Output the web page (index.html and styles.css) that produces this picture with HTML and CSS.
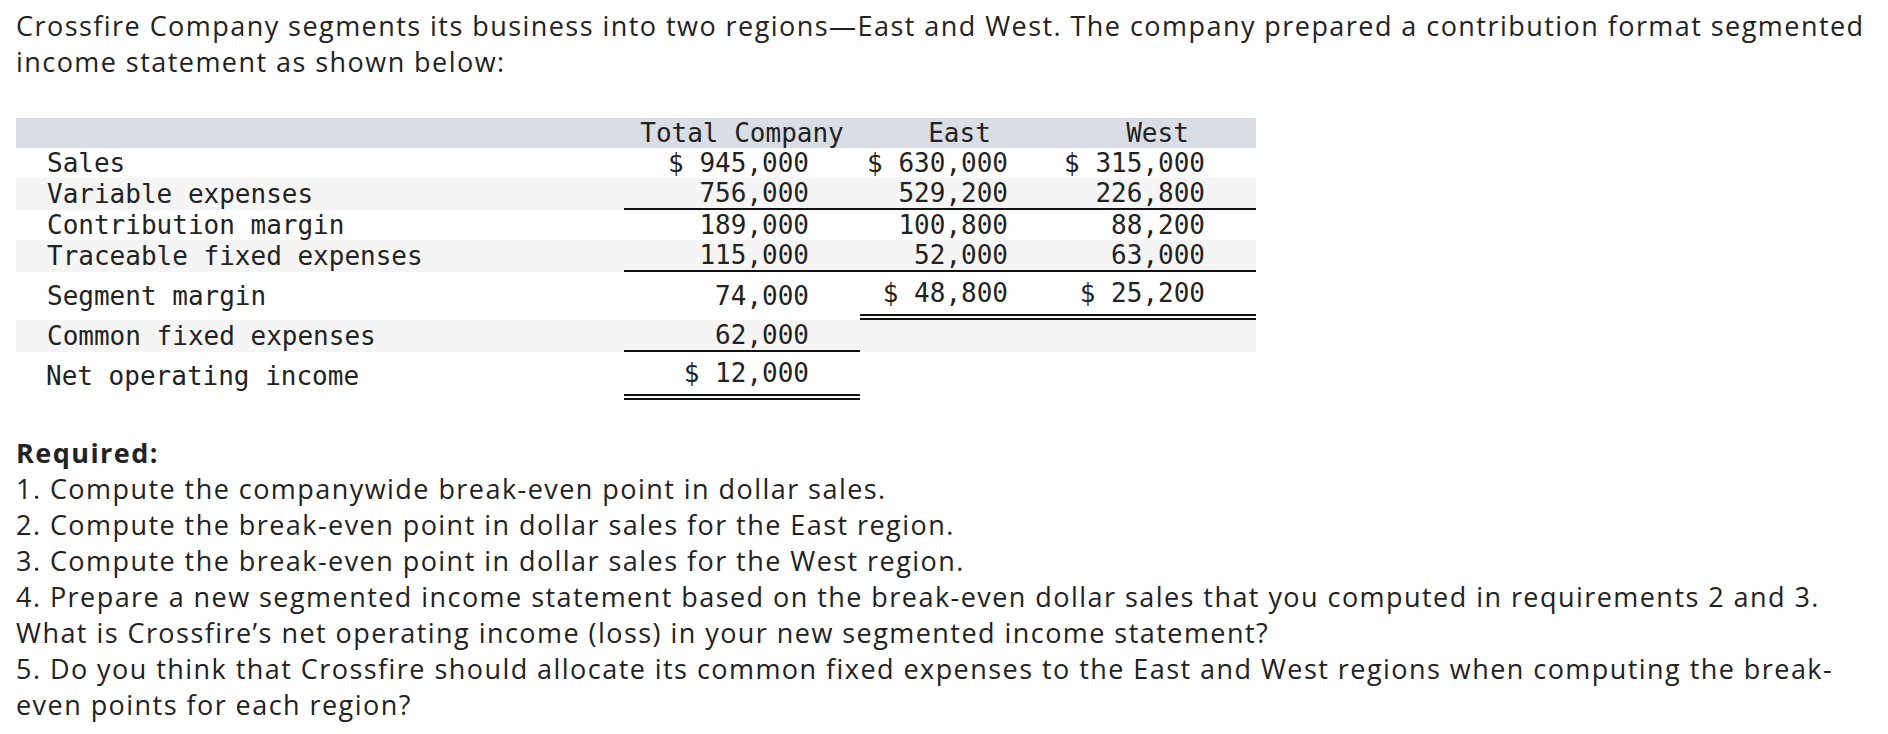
FILE: index.html
```html
<!DOCTYPE html>
<html lang="en">
<head>
<meta charset="utf-8">
<title>Crossfire Company</title>
<link rel="stylesheet" href="styles.css">
</head>
<body>
<div class="page">
  <p class="intro">Crossfire Company segments its business into two regions—East and West. The company prepared a contribution format segmented<br>income statement as shown below:</p>

  <table class="stmt">
    <colgroup>
      <col class="c-label">
      <col class="c-total">
      <col class="c-east">
      <col class="c-west">
    </colgroup>
    <thead>
      <tr class="head">
        <th></th>
        <th>Total Company</th>
        <th>East</th>
        <th>West</th>
      </tr>
    </thead>
    <tbody>
      <tr>
        <td class="label">Sales</td>
        <td class="num">$ 945,000</td>
        <td class="num">$ 630,000</td>
        <td class="num">$ 315,000</td>
      </tr>
      <tr class="alt">
        <td class="label">Variable expenses</td>
        <td class="num ul">756,000</td>
        <td class="num ul">529,200</td>
        <td class="num ul">226,800</td>
      </tr>
      <tr>
        <td class="label">Contribution margin</td>
        <td class="num">189,000</td>
        <td class="num">100,800</td>
        <td class="num">88,200</td>
      </tr>
      <tr class="alt">
        <td class="label">Traceable fixed expenses</td>
        <td class="num ul">115,000</td>
        <td class="num ul">52,000</td>
        <td class="num ul">63,000</td>
      </tr>
      <tr class="tall">
        <td class="label">Segment margin</td>
        <td class="num">74,000</td>
        <td class="num dbl">$ 48,800</td>
        <td class="num dbl">$ 25,200</td>
      </tr>
      <tr class="alt">
        <td class="label">Common fixed expenses</td>
        <td class="num ul">62,000</td>
        <td></td>
        <td></td>
      </tr>
      <tr class="tall">
        <td class="label net">Net operating income</td>
        <td class="num dbl">$ 12,000</td>
        <td></td>
        <td></td>
      </tr>
    </tbody>
  </table>

  <div class="required">
    <p class="req-title">Required:</p>
    <p>1. Compute the companywide break-even point in dollar sales.</p>
    <p>2. Compute the break-even point in dollar sales for the East region.</p>
    <p>3. Compute the break-even point in dollar sales for the West region.</p>
    <p>4. Prepare a new segmented income statement based on the break-even dollar sales that you computed in requirements 2 and 3.<br>What is Crossfire’s net operating income (loss) in your new segmented income statement?</p>
    <p>5. Do you think that Crossfire should allocate its common fixed expenses to the East and West regions when computing the break-<br>even points for each region?</p>
  </div>
</div>
</body>
</html>
```

FILE: styles.css
```css
html, body {
  margin: 0;
  padding: 0;
  background: #ffffff;
}

.page {
  padding: 8px 16px 0 16px;
  width: 1856px;
  font-family: "Open Sans", "Liberation Sans", sans-serif;
  font-size: 27px;
  line-height: 36px;
  letter-spacing: 1.45px;
  color: #222222;
  font-variant-ligatures: none;
  white-space: nowrap;
}

.page p {
  margin: 0;
}

.intro {
  margin-bottom: 38px !important;
}

.stmt {
  border-collapse: separate;
  border-spacing: 0;
  width: 1240px;
  table-layout: fixed;
  font-family: "DejaVu Sans Mono", "Liberation Mono", monospace;
  font-size: 26px;
  line-height: 30px;
  letter-spacing: 0;
  color: #222222;
}

.c-label { width: 608px; }
.c-total { width: 236px; }
.c-east { width: 199px; }
.c-west { width: 197px; }

.stmt th,
.stmt td {
  padding: 0;
  vertical-align: middle;
  white-space: nowrap;
}

.head {
  background: #d9dde5;
}

.head th {
  font-weight: normal;
  text-align: center;
  height: 30px;
}

.alt {
  background: #f5f5f5;
}

.label {
  padding-left: 31px !important;
  text-align: left;
}

.label.net {
  padding-left: 30px !important;
}

.num {
  text-align: right;
  padding-right: 51px !important;
}

.ul {
  border-bottom: 2px solid #111111;
}

.dbl {
  border-bottom: 6px double #111111;
}

.tall td {
  height: 48px;
}

.tall td.dbl {
  height: 42px;
}

.required {
  margin-top: 35px;
}

.req-title {
  font-weight: 700;
}
```
